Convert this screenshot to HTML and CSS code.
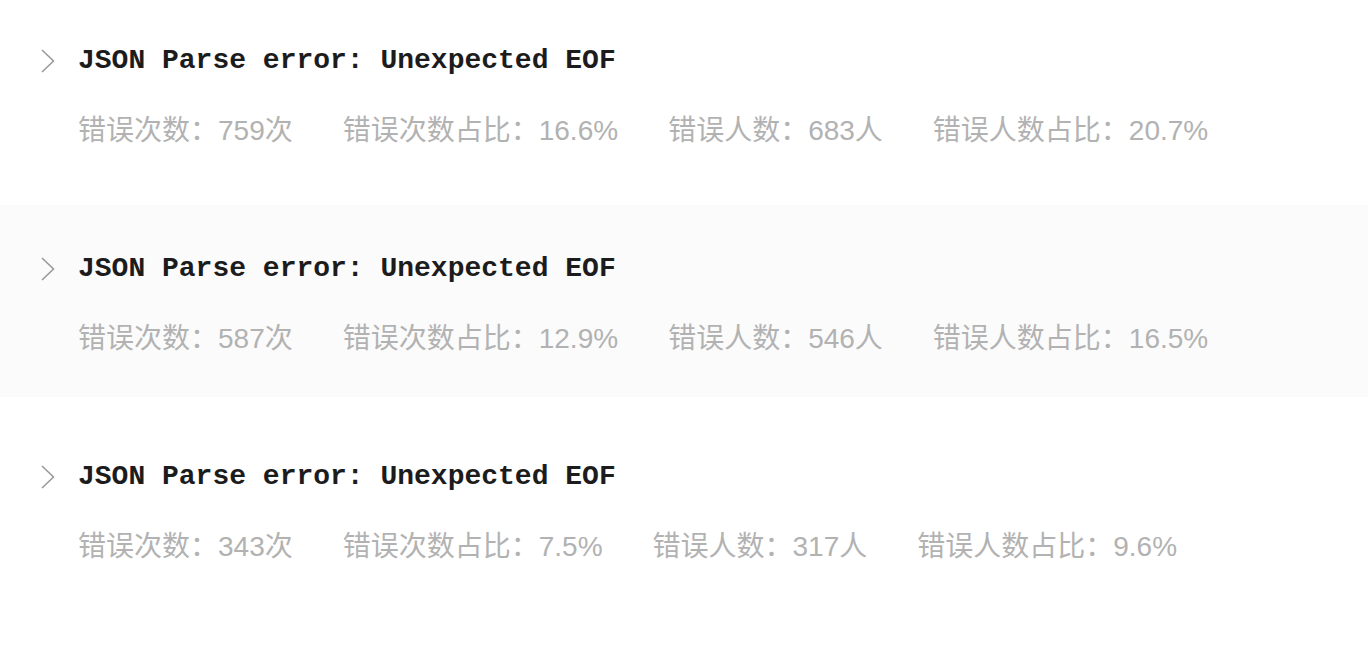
FILE: index.html
```html
<!DOCTYPE html>
<html lang="zh-CN">
<head>
<meta charset="utf-8">
<title>Errors</title>
<link rel="stylesheet" href="styles.css">
</head>
<body>
<div class="list">
  <div class="row">
    <div class="title">
      <svg class="chevron" width="16" height="26" viewBox="0 0 16 26"><path d="M2 2 L13.5 13 L2 24" fill="none" stroke="#9a9a9a" stroke-width="1.6"/></svg>
      <span class="msg">JSON Parse error: Unexpected EOF</span>
    </div>
    <div class="stats">
      <span>错误次数：759次</span>
      <span>错误次数占比：16.6%</span>
      <span>错误人数：683人</span>
      <span>错误人数占比：20.7%</span>
    </div>
  </div>
  <div class="row alt">
    <div class="title">
      <svg class="chevron" width="16" height="26" viewBox="0 0 16 26"><path d="M2 2 L13.5 13 L2 24" fill="none" stroke="#9a9a9a" stroke-width="1.6"/></svg>
      <span class="msg">JSON Parse error: Unexpected EOF</span>
    </div>
    <div class="stats">
      <span>错误次数：587次</span>
      <span>错误次数占比：12.9%</span>
      <span>错误人数：546人</span>
      <span>错误人数占比：16.5%</span>
    </div>
  </div>
  <div class="row">
    <div class="title">
      <svg class="chevron" width="16" height="26" viewBox="0 0 16 26"><path d="M2 2 L13.5 13 L2 24" fill="none" stroke="#9a9a9a" stroke-width="1.6"/></svg>
      <span class="msg">JSON Parse error: Unexpected EOF</span>
    </div>
    <div class="stats">
      <span>错误次数：343次</span>
      <span>错误次数占比：7.5%</span>
      <span>错误人数：317人</span>
      <span>错误人数占比：9.6%</span>
    </div>
  </div>
</div>
</body>
</html>
```
FILE: styles.css
```css
html, body {
  margin: 0;
  padding: 0;
  background: #ffffff;
  overflow: hidden;
}
.list {
  display: flex;
  flex-direction: column;
  gap: 16px;
  margin-top: -3px;
}
.row {
  height: 192px;
  box-sizing: border-box;
  padding: 48px 0 0 40px;
  display: flex;
  flex-direction: column;
  gap: 38px;
}
.row.alt {
  background: #fbfbfb;
}
.title {
  display: flex;
  align-items: center;
  height: 32px;
  gap: 22px;
}
.chevron {
  display: block;
  flex: none;
}
.msg {
  font-family: "Nimbus Mono PS", "Nimbus Mono L", "Courier New", "FreeMono", "Liberation Mono", monospace;
  font-weight: bold;
  font-size: 28px;
  line-height: 32px;
  color: #1c1c1c;
  white-space: nowrap;
}
.stats {
  display: flex;
  gap: 50px;
  padding-left: 38px;
  font-family: "Liberation Sans", "Noto Sans CJK SC", sans-serif;
  font-size: 28px;
  line-height: 32px;
  color: #b2b2b2;
  white-space: nowrap;
}
```
